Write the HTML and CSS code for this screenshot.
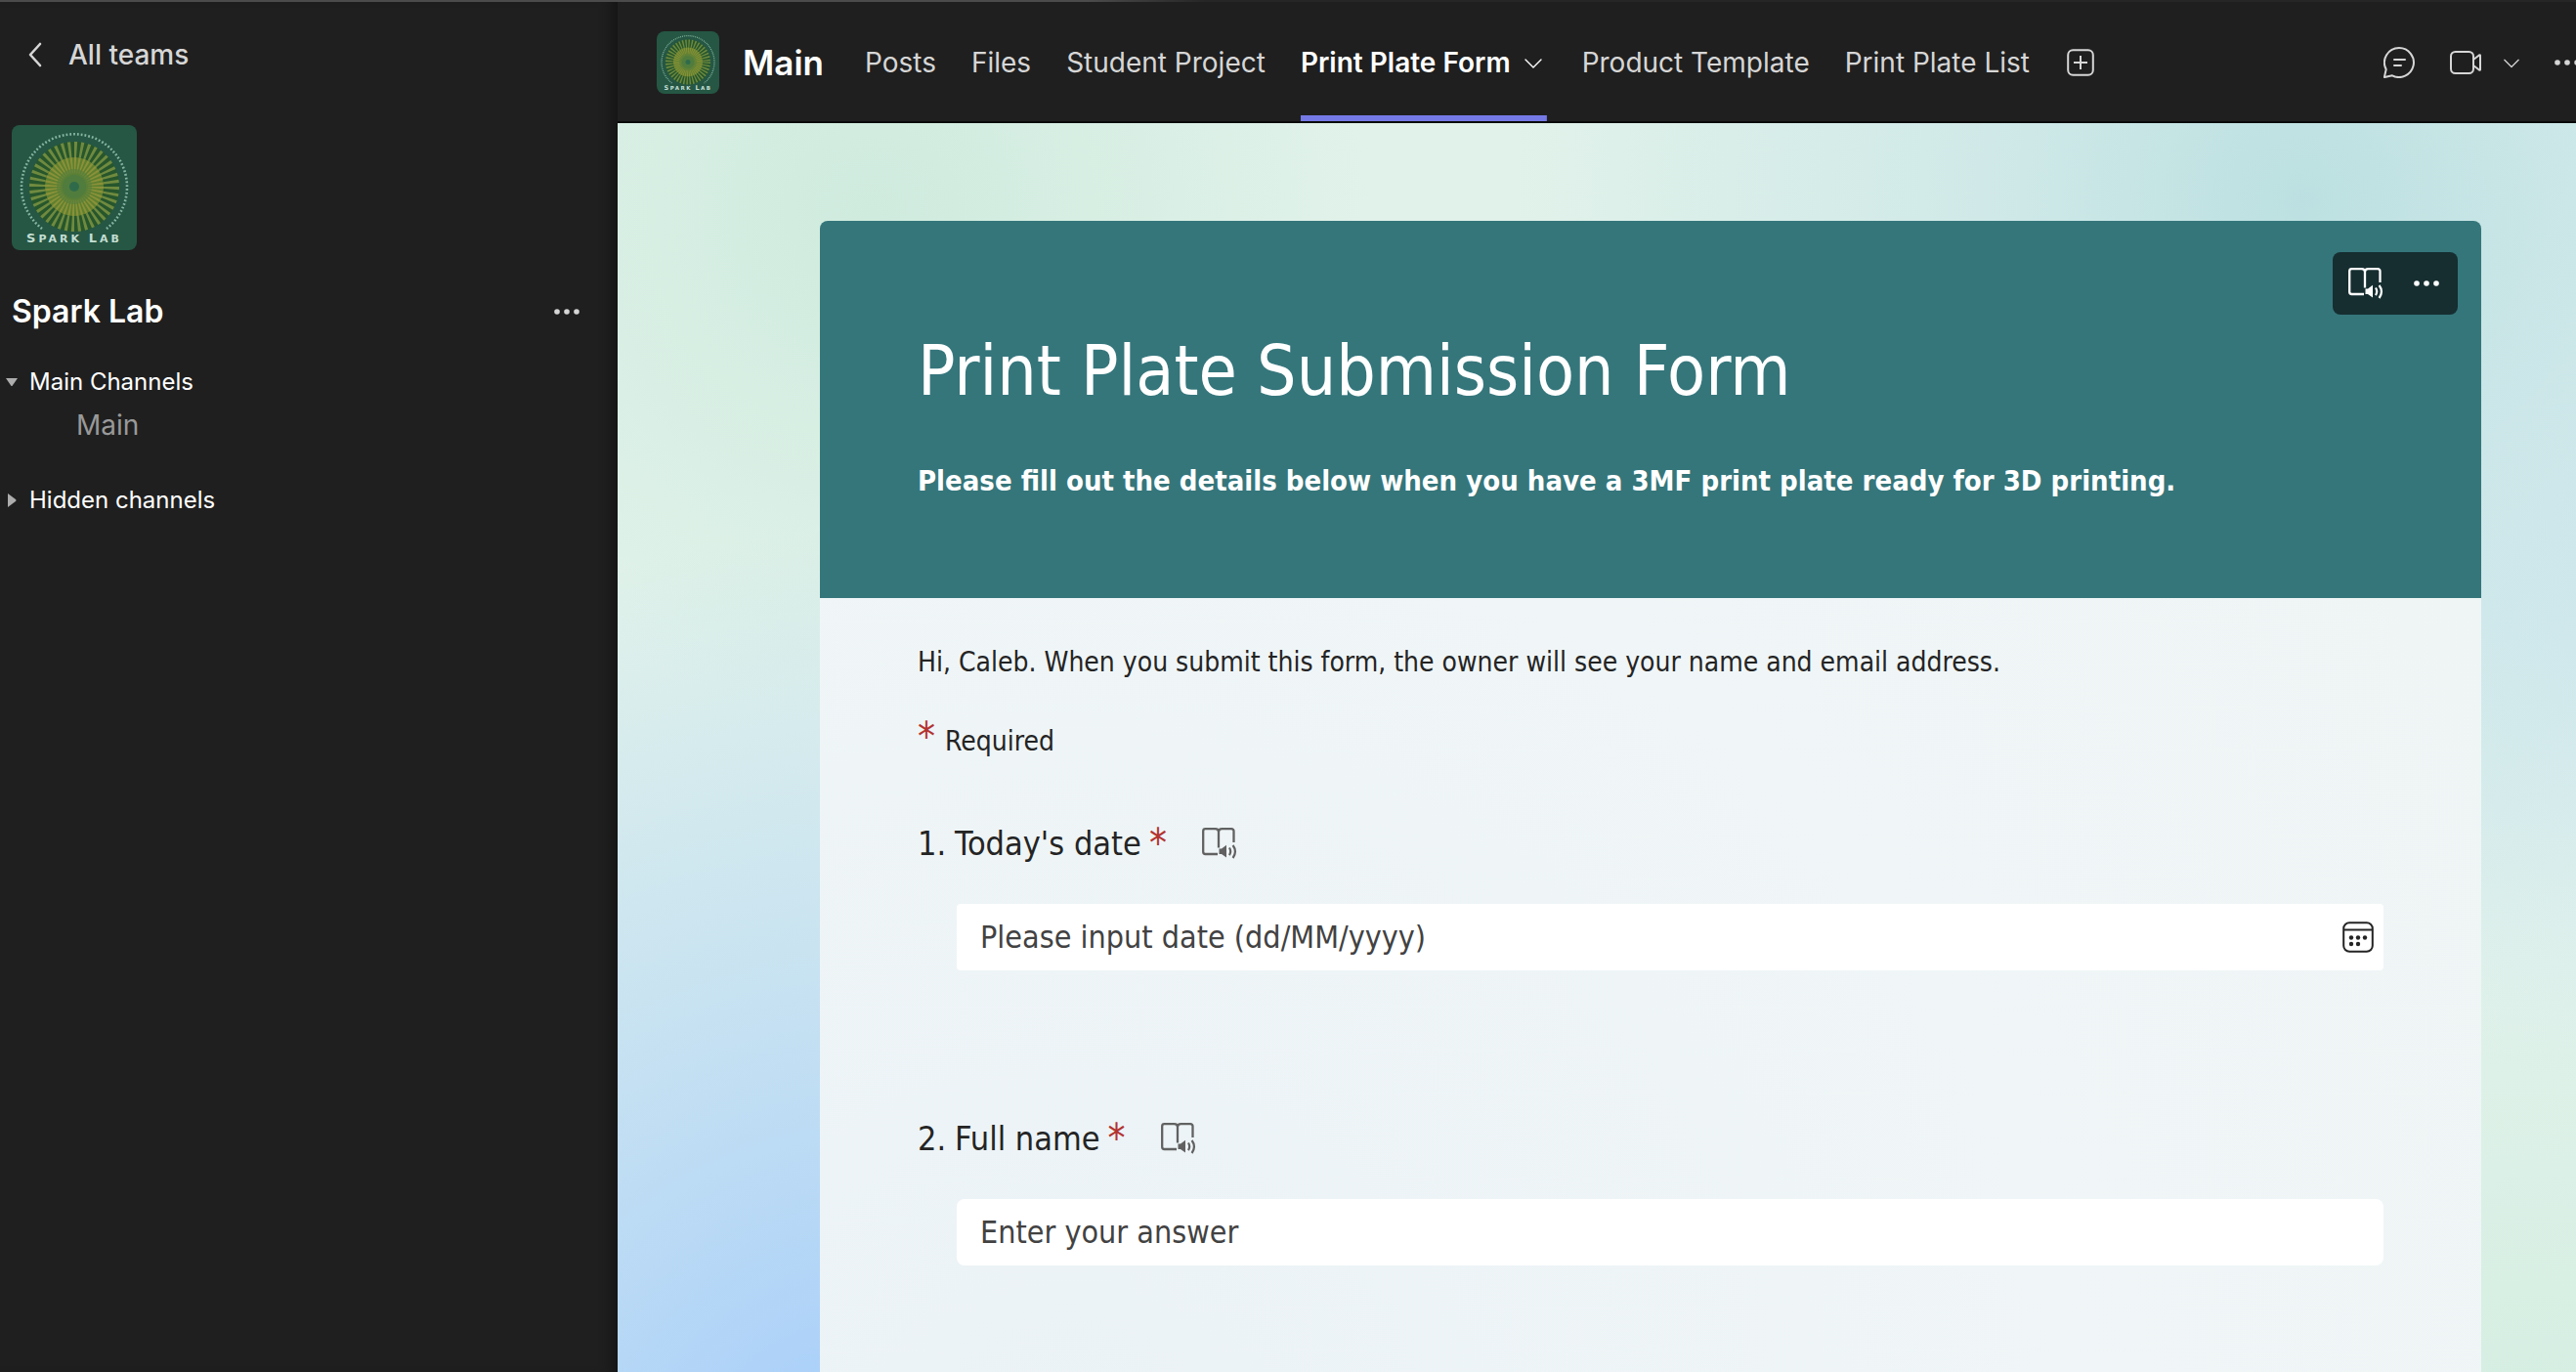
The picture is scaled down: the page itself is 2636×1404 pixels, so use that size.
FILE: index.html
```html
<!DOCTYPE html>
<html lang="en">
<head>
  <meta charset="UTF-8" />
  <title>Spark Lab - Print Plate Form</title>
  <link rel="stylesheet" href="styles.css">
</head>
<body>

  <!-- Shared icons -->
  <svg class="sprite" aria-hidden="true">
    <symbol id="logo" viewBox="0 0 128 128">
      <rect width="128" height="128" fill="#255744" />
      <circle cx="64" cy="63" r="46" fill="#27562c" />
      <circle cx="64" cy="63" r="38" fill="none" stroke="#6f8a3f" stroke-width="16" pathLength="160" stroke-dasharray="1.8 2.2" />
      <circle cx="64" cy="63" r="30" fill="#5f802f" />
      <circle cx="64" cy="63" r="22" fill="none" stroke="#8a9139" stroke-width="16" pathLength="160" stroke-dasharray="2 2" />
      <circle cx="64" cy="63" r="18" fill="#567f3c" opacity="0.6" />
      <circle cx="64" cy="63" r="12" fill="#4c7a42" opacity="0.7" />
      <circle cx="64" cy="63" r="5" fill="#2f6b4a" />
      <path d="M31 106A54 54 0 1 1 97 106" fill="none" stroke="#86b5a2" stroke-width="2.6" stroke-dasharray="1.8 2" />
      <text x="64" y="120" text-anchor="middle" class="logo-text"><tspan class="logo-cap">S</tspan>PARK <tspan class="logo-cap">L</tspan>AB</text>
    </symbol>
    <symbol id="dots" viewBox="0 0 28 28">
      <circle cx="4" cy="14" r="2.8" /><circle cx="14" cy="14" r="2.8" /><circle cx="24" cy="14" r="2.8" />
    </symbol>
    <symbol id="chevron" viewBox="0 0 20 20">
      <path d="M2 7l8 8 8-8" fill="none" stroke="currentColor" stroke-width="1.4" stroke-linecap="round" stroke-linejoin="round" />
    </symbol>
    <symbol id="reader" viewBox="0 0 36 32">
      <path d="M16 27H3.5A2.3 2.3 0 0 1 1.2 24.7V3.5A2.3 2.3 0 0 1 3.5 1.2H13.5Q17 1.2 17 4.2Q17 1.2 20.5 1.2H30.2A2.3 2.3 0 0 1 32.5 3.5V15M17 4V20.5" fill="none" stroke="currentColor" stroke-width="2.3" />
      <path d="M17.5 21.5H20L25 17.8V30.5L20 27H17.5z" fill="currentColor" />
      <path d="M28 20.5Q30.4 24.3 28 28.2M31.6 18Q36.3 24.3 31.6 31" fill="none" stroke="currentColor" stroke-width="2.2" />
    </symbol>
  </svg>

  <div class="app">

    <!-- Channel list -->
    <aside class="sidebar">
      <a href="#teams" class="back">
        <svg class="back-icon" viewBox="0 0 16 26"><path d="M13 2L3 13l10 11" fill="none" stroke="currentColor" stroke-width="2.6" stroke-linecap="round" stroke-linejoin="round" /></svg>
        All teams
      </a>
      <svg class="team-logo" role="img" aria-label="Spark Lab logo"><use href="#logo" /></svg>
      <div class="team">
        <h2>Spark Lab</h2>
        <button type="button" class="icon-btn" aria-label="More options"><svg class="dots"><use href="#dots" /></svg></button>
      </div>
      <button type="button" class="group">
        <svg class="caret" viewBox="0 0 14 14"><path d="M1 3h12L7.8 10.5q-.8 1-1.6 0z" /></svg>
        Main Channels
      </button>
      <a href="#main" class="channel">Main</a>
      <button type="button" class="group">
        <svg class="caret" viewBox="0 0 14 14"><path d="M3 0v14l8-6q1-1 0-2z" /></svg>
        Hidden channels
      </button>
    </aside>

    <main class="content">

      <!-- Tabs -->
      <header class="topbar">
        <svg class="channel-logo" role="img" aria-label="Spark Lab logo"><use href="#logo" /></svg>
        <h1 class="channel-name">Main</h1>
        <nav class="tabs">
          <a href="#posts">Posts</a>
          <a href="#files">Files</a>
          <a href="#project">Student Project</a>
          <a href="#form" class="active">Print Plate Form <svg class="chevron"><use href="#chevron" /></svg></a>
          <a href="#template">Product Template</a>
          <a href="#list">Print Plate List</a>
        </nav>
        <button type="button" class="icon-btn" aria-label="Add a tab">
          <svg class="add-icon" viewBox="0 0 28 28"><rect x="1.2" y="1.2" width="25.6" height="25.6" rx="5" /><path d="M14 7v14M7 14h14" /></svg>
        </button>
        <div class="actions">
          <button type="button" class="icon-btn" aria-label="Open chat">
            <svg class="action-icon" viewBox="0 0 32 32"><path d="M16 1A15 15 0 1 1 9 29.3L1.2 31Q.8 31 1 30.4L2.7 23A15 15 0 0 1 16 1zM11 13h11M11 19h7" /></svg>
          </button>
          <button type="button" class="icon-btn" aria-label="Meet now">
            <svg class="action-icon" viewBox="0 0 32 32"><rect x="1" y="5" width="23" height="22" rx="4.5" /><path d="M24 13L30.2 8.2Q31 8 31 8.8V23.2Q31 24 30.2 23.8L24 19" /></svg>
          </button>
          <button type="button" class="icon-btn" aria-label="Meeting options"><svg class="chevron"><use href="#chevron" /></svg></button>
          <button type="button" class="icon-btn more" aria-label="More options"><svg class="dots"><use href="#dots" /></svg></button>
        </div>
      </header>

      <!-- Form -->
      <div class="page">
        <form class="form">
          <div class="form-header">
            <div class="toolbar">
              <button type="button" class="icon-btn" aria-label="Immersive Reader"><svg class="reader"><use href="#reader" /></svg></button>
              <button type="button" class="icon-btn" aria-label="More options"><svg class="dots"><use href="#dots" /></svg></button>
            </div>
            <h2 class="form-title">Print Plate Submission Form</h2>
            <p class="form-subtitle">Please fill out the details below when you have a 3MF print plate ready for 3D printing.</p>
          </div>

          <div class="form-body">
            <p class="note">Hi, Caleb. When you submit this form, the owner will see your name and email address.</p>
            <p class="note"><span class="star">*</span>Required</p>

            <div class="question">
              <div class="question-title">
                <span class="number">1.</span>
                <label for="date">Today's date</label>
                <span class="star">*</span>
                <button type="button" class="icon-btn" aria-label="Immersive Reader"><svg class="reader"><use href="#reader" /></svg></button>
              </div>
              <div class="field date-field">
                <input type="text" id="date" name="date" placeholder="Please input date (dd/MM/yyyy)" required>
                <button type="button" class="icon-btn" aria-label="Pick a date">
                  <svg class="calendar" viewBox="0 0 32 32">
                    <rect x="1.2" y="1.2" width="29.6" height="29.6" rx="6" /><path d="M1 8.5h30" />
                    <g class="days"><circle cx="9" cy="16.5" r="2.2" /><circle cx="16" cy="16.5" r="2.2" /><circle cx="23" cy="16.5" r="2.2" /><circle cx="9" cy="23" r="2.2" /><circle cx="16" cy="23" r="2.2" /></g>
                  </svg>
                </button>
              </div>
            </div>

            <div class="question">
              <div class="question-title">
                <span class="number">2.</span>
                <label for="name">Full name</label>
                <span class="star">*</span>
                <button type="button" class="icon-btn" aria-label="Immersive Reader"><svg class="reader"><use href="#reader" /></svg></button>
              </div>
              <div class="field">
                <input type="text" id="name" name="name" placeholder="Enter your answer" required>
              </div>
            </div>
          </div>
        </form>
      </div>

    </main>
  </div>

</body>
</html>
```
FILE: styles.css
```css
* {
  box-sizing: border-box;
}
body {
  margin: 0;
  background-color: #1f1f1f;
  color: #d6d6d6;
  font-family: Inter, sans-serif;
  font-size: 28px;
  line-height: 40px;
}
h1, h2, p {
  margin: 0;
}
a {
  color: inherit;
  text-decoration: none;
}
button, input {
  font: inherit;
  color: inherit;
}
svg {
  display: block;
  flex: none;
}
.sprite {
  display: none;
}
.app {
  display: flex;
  height: 100vh;
  overflow: hidden;
}
.icon-btn {
  display: flex;
  padding: 0;
  border: none;
  background: none;
  cursor: pointer;
}
.dots {
  width: 28px;
  height: 28px;
  fill: currentColor;
}
.chevron {
  width: 20px;
  height: 20px;
}
.reader {
  width: 36px;
  height: 32px;
}
.logo-text {
  font-family: "DejaVu Sans", sans-serif;
  font-size: 11px;
  font-weight: bold;
  letter-spacing: 3px;
  fill: #c4ded3;
}
.logo-cap {
  font-size: 13px;
}

/* Sidebar */
.sidebar {
  display: flex;
  flex-direction: column;
  align-items: flex-start;
  flex: none;
  width: 632px;
  padding: 34px 38px 0 12px;
  border-top: 2px solid #4b4b4b;
  box-shadow: inset -14px 0 12px -8px #151515;
}
.back {
  display: flex;
  align-items: center;
  gap: 26px;
  padding-left: 16px;
  font-weight: 500;
}
.back-icon {
  width: 16px;
  height: 26px;
}
.team-logo {
  width: 128px;
  height: 128px;
  margin-top: 52px;
  border-radius: 8px;
}
.team {
  display: flex;
  align-items: center;
  justify-content: space-between;
  width: 100%;
  margin-top: 43px;
}
.team h2 {
  color: #fff;
  font-size: 32px;
  font-weight: 600;
}
.group {
  display: flex;
  align-items: center;
  gap: 11px;
  margin: 36px 0 0 -7px;
  padding: 0;
  border: none;
  background: none;
  color: #fff;
  font-size: 24px;
  line-height: 32px;
  cursor: pointer;
}
.caret {
  width: 14px;
  height: 14px;
  fill: #adadad;
}
.channel {
  margin: 8px 0 5px 66px;
  color: #999;
}

/* Top bar */
.content {
  display: flex;
  flex-direction: column;
  flex: 1;
  min-width: 0;
}
.topbar {
  display: flex;
  align-items: center;
  flex: none;
  height: 126px;
  padding: 4px 0 0 40px;
  border-bottom: 2px solid #0a0a0a;
  background: linear-gradient(to right, #4b4b4b 24%, #262626 30%) top / 100% 2px no-repeat;
}
.channel-logo {
  width: 64px;
  height: 64px;
  border-radius: 8px;
}
.channel-name {
  margin: 0 42px 0 24px;
  color: #fff;
  font-size: 35px;
  font-weight: 600;
}
.tabs {
  display: flex;
  align-self: stretch;
  gap: 36px;
}
.tabs a {
  display: flex;
  align-items: center;
  gap: 13px;
  white-space: nowrap;
}
.tabs .active {
  padding-right: 4px;
  color: #fff;
  font-weight: 600;
  background: linear-gradient(#7579e6, #7579e6) bottom / 100% 6px no-repeat;
}
.add-icon {
  width: 28px;
  height: 28px;
  margin-left: 38px;
}
.add-icon, .action-icon, .calendar {
  fill: none;
  stroke: currentColor;
  stroke-width: 2;
}
.actions {
  display: flex;
  align-items: center;
  gap: 36px;
  margin-left: auto;
}
.action-icon {
  width: 32px;
  height: 32px;
  stroke-linecap: round;
  stroke-linejoin: round;
}
.actions .chevron {
  width: 18px;
  margin: 0 -2px 0 -14px;
}
.more {
  margin-right: -5px;
}

/* Form */
.page {
  flex: 1;
  padding: 100px 97px 0 207px;
  color: #242424;
  font-family: "DejaVu Sans Condensed", "DejaVu Sans", sans-serif;
  background:
    radial-gradient(circle at 14% 110%, #a4ccfb 0%, rgba(164, 204, 251, 0.85) 9%, rgba(164, 204, 251, 0.42) 26%, rgba(164, 204, 251, 0) 46%),
    radial-gradient(circle at 86% 6%, #bce0e1 0%, rgba(200, 229, 231, 0.7) 15%, rgba(210, 232, 240, 0) 38%),
    radial-gradient(circle at 13% 7%, #cfebde 0%, rgba(208, 235, 223, 0) 24%),
    radial-gradient(circle at 103% 34%, #d2e8f0 0%, rgba(210, 232, 240, 0) 24%),
    radial-gradient(circle at 98% 108%, #d2ede0 0%, rgba(213, 238, 226, 0) 24%),
    #e1f2ea;
}
.form {
  display: flex;
  flex-direction: column;
  height: 100%;
}
.form-header {
  position: relative;
  padding: 110px 100px 100px;
  border-radius: 8px 8px 0 0;
  background-color: #35767b;
  color: #fff;
}
.toolbar {
  position: absolute;
  top: 32px;
  right: 24px;
  display: flex;
  align-items: center;
  gap: 30px;
  height: 64px;
  padding: 0 18px 0 16px;
  border-radius: 8px;
  background-color: #162e30;
}
.form-title {
  font-size: 71px;
  font-weight: normal;
  line-height: 88px;
}
.form-subtitle {
  margin-top: 48px;
  font-size: 29px;
  font-weight: bold;
}
.form-body {
  flex: 1;
  padding: 46px 100px 0;
  background: radial-gradient(circle at 15% 110%, #ebf2f6, #f0f6f7 60%, #eff5f5);
}
.note + .note {
  display: flex;
  align-items: baseline;
  gap: 10px;
  margin: 36px 0 62px;
}
.star {
  color: #b3332f;
  font-size: 40px;
}
.question {
  margin-bottom: 150px;
}
.question-title {
  display: flex;
  align-items: center;
  font-size: 34px;
  line-height: 44px;
}
.number {
  width: 38px;
}
.question-title .star {
  margin: 0 36px 0 8px;
}
.question-title .icon-btn {
  color: #616161;
}
.field {
  display: flex;
  align-items: center;
  height: 68px;
  margin: 40px 0 0 40px;
  padding: 0 10px 0 24px;
  border-radius: 8px;
  background-color: #fff;
}
.date-field {
  border-radius: 4px;
}
.field input {
  flex: 1;
  min-width: 0;
  padding: 0;
  border: none;
  outline: none;
  background: none;
  font-size: 32px;
}
.field input::placeholder {
  color: #424242;
  opacity: 1;
}
.calendar {
  width: 32px;
  height: 32px;
}
.days {
  fill: currentColor;
  stroke: none;
}
```
